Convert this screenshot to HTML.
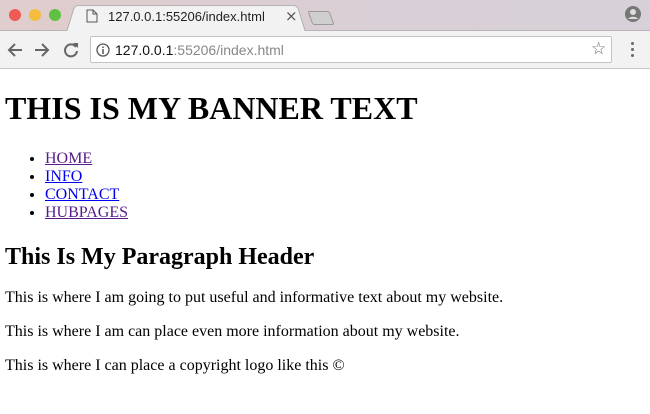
<!DOCTYPE html>
<html><head><meta charset="utf-8"><style>
*{box-sizing:border-box}
html,body{margin:0;padding:0;width:650px;height:414px;overflow:hidden;background:#fff}
#tabs{position:absolute;left:0;top:0;width:650px;height:31px;background:linear-gradient(90deg,#e0cdcd,#d9cfd6 60%,#d8d0d8);border-bottom:1px solid #b9b4b6}
.dot{position:absolute;top:9px;width:12px;height:12px;border-radius:50%}
#tab{position:absolute;left:66px;top:3px;width:240px;height:29px;background:#f2f2f2;border:1px solid #aaa;border-bottom:none;border-radius:4px 4px 0 0;transform:perspective(40px) rotateX(6deg);transform-origin:bottom}
#tabtxt{position:absolute;left:108px;top:9px;font:13px "Liberation Sans",sans-serif;color:#222}
#newtab{position:absolute;left:250px;top:11px;width:22px;height:14px;background:#cfcfcf;border:1px solid #999;border-radius:2px;transform:skewX(20deg)}
#bar{position:absolute;left:0;top:31px;width:650px;height:38px;background:#f2f2f2;border-bottom:1px solid #c8c8c8}
#omni{position:absolute;left:90px;top:5px;width:522px;height:27px;background:#fff;border:1px solid #c3c3c3;border-radius:2px}
#url{position:absolute;left:24px;top:5px;font:14px "Liberation Sans",sans-serif;color:#888}
#url b{font-weight:normal;color:#111}
.ic{position:absolute;font:18px "DejaVu Sans",sans-serif;color:#666}
#page{position:absolute;left:0;top:69px;width:650px;padding:0 5px;font-family:"Liberation Serif",serif;color:#000}
h1{font-size:32px;margin:21px 0;line-height:37px}
ul{margin:23px 0 0 0;padding-left:40px;font-size:16px;line-height:18px}
a{color:#0000ee}
a.v{color:#551a8b}
h2{font-size:24px;margin:21px 0 18px;line-height:28px}
p{font-size:16px;margin:16px 0;line-height:18px}
</style></head><body>
<div id="tabs">
<div class="dot" style="left:9px;background:#ee5b55"></div>
<div class="dot" style="left:29px;background:#f5bd3d"></div>
<div class="dot" style="left:49px;background:#5fc142"></div>
<div id="tab"></div>
<svg style="position:absolute;left:86px;top:9px" width="12" height="14"><path d="M1 1h6l4 4v8H1z M7 1v4h4" fill="none" stroke="#555"/></svg>
<div id="tabtxt">127.0.0.1:55206/index.html</div>
<div style="position:absolute;left:285px;top:7px;font:15px 'DejaVu Sans',sans-serif;color:#555">×</div>
<div id="newtab" style="left:310px"></div>
<svg style="position:absolute;left:625px;top:6px" width="16" height="16"><circle cx="8" cy="8" r="8" fill="#777"/><circle cx="8" cy="6" r="3" fill="#ddd"/><path d="M3 13c2-3 8-3 10 0" fill="#ddd"/></svg>
</div>
<div id="bar">
<svg style="position:absolute;left:7px;top:11px" width="16" height="16"><path d="M15 8H2M8 2L2 8l6 6" fill="none" stroke="#666" stroke-width="2"/></svg>
<svg style="position:absolute;left:34px;top:11px" width="16" height="16"><path d="M1 8h13M8 2l6 6-6 6" fill="none" stroke="#666" stroke-width="2"/></svg>
<svg style="position:absolute;left:63px;top:11px" width="16" height="16"><path d="M13 5A6 6 0 1 0 14 9" fill="none" stroke="#666" stroke-width="2"/><path d="M10 1h5v5z" fill="#666"/></svg>
<div id="omni">
<svg style="position:absolute;left:5px;top:6px" width="14" height="14"><circle cx="7" cy="7" r="6" fill="none" stroke="#555" stroke-width="1.3"/><path d="M7 6v5M7 3.5v1.5" stroke="#555" stroke-width="1.5"/></svg>
<div id="url"><b>127.0.0.1</b>:55206/index.html</div>
<div class="ic" style="left:500px;top:2px;font-size:17px">☆</div>
</div>
<div style="position:absolute;left:631px;top:11px;width:3px">
<div style="width:3px;height:3px;background:#666;border-radius:50%;margin-bottom:3px"></div>
<div style="width:3px;height:3px;background:#666;border-radius:50%;margin-bottom:3px"></div>
<div style="width:3px;height:3px;background:#666;border-radius:50%"></div></div>
</div>
<div id="page">
<h1>THIS IS MY BANNER TEXT</h1>
<ul>
<li><a class="v" href="#">HOME</a></li>
<li><a href="#">INFO</a></li>
<li><a href="#">CONTACT</a></li>
<li><a class="v" href="#">HUBPAGES</a></li>
</ul>
<h2>This Is My Paragraph Header</h2>
<p>This is where I am going to put useful and informative text about my website.</p>
<p>This is where I am can place even more information about my website.</p>
<p>This is where I can place a copyright logo like this ©</p>
</div>
</body></html>
